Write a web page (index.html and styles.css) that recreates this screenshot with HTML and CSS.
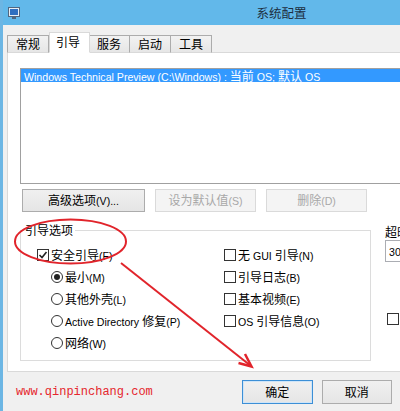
FILE: index.html
```html
<!DOCTYPE html>
<html lang="zh-CN">
<head>
<meta charset="utf-8">
<title>系统配置</title>
<link rel="stylesheet" href="styles.css">
</head>
<body>
<div class="window">
  <header class="titlebar">
    <svg class="app-icon" width="12" height="12" viewBox="0 0 12 12">
      <rect x="0.5" y="0.5" width="11" height="9" fill="#e8eef5" stroke="#51667f"/>
      <rect x="2" y="2" width="8" height="6" fill="#2f6fc0"/>
      <rect x="4" y="10" width="4" height="2" fill="#51667f"/>
    </svg>
    <span class="title">系统配置</span>
    <span></span>
  </header>
  <div class="client">
    <div class="tabs">
      <div class="tab">常规</div>
      <div class="tab active">引导</div>
      <div class="tab">服务</div>
      <div class="tab">启动</div>
      <div class="tab">工具</div>
    </div>
    <div class="panel">
      <div class="listbox">
        <div class="item selected"><span class="en">Windows Technical Preview (C:\Windows) : </span>当前<span class="en"> OS; </span>默认<span class="en"> OS</span></div>
      </div>
      <div class="btn-row">
        <button class="btn adv">高级选项<span class="en">(V)...</span></button>
        <button class="btn mid" disabled>设为默认值<span class="en">(S)</span></button>
        <button class="btn mid" disabled>删除<span class="en">(D)</span></button>
      </div>
      <div class="lower">
        <fieldset class="group">
          <legend>引导选项</legend>
          <div class="cols">
            <div class="col">
              <div class="opt"><span class="cb"><svg width="10" height="10" viewBox="0 0 10 10"><polyline points="1.5,5 4,7.5 8.5,2" fill="none" stroke="#222" stroke-width="1.6"/></svg></span><span class="lbl">安全引导<span class="en">(F)</span></span></div>
              <div class="opt sub"><span class="rb on"></span><span class="lbl">最小<span class="en">(M)</span></span></div>
              <div class="opt sub"><span class="rb"></span><span class="lbl">其他外壳<span class="en">(L)</span></span></div>
              <div class="opt sub"><span class="rb"></span><span class="lbl"><span class="en">Active Directory </span>修复<span class="en">(P)</span></span></div>
              <div class="opt sub"><span class="rb"></span><span class="lbl">网络<span class="en">(W)</span></span></div>
            </div>
            <div class="col">
              <div class="opt"><span class="cb"></span><span class="lbl">无<span class="en"> GUI </span>引导<span class="en">(N)</span></span></div>
              <div class="opt"><span class="cb"></span><span class="lbl">引导日志<span class="en">(B)</span></span></div>
              <div class="opt"><span class="cb"></span><span class="lbl">基本视频<span class="en">(E)</span></span></div>
              <div class="opt"><span class="cb"></span><span class="lbl"><span class="en">OS </span>引导信息<span class="en">(O)</span></span></div>
            </div>
          </div>
        </fieldset>
        <div class="timeout">
          <div class="t-label">超时<span class="en">(T):</span></div>
          <div class="t-input"><span class="en">30</span></div>
          <div class="opt perm"><span class="cb"></span><span class="lbl">使所有引导设置成为永久设置<span class="en">(K)</span></span></div>
        </div>
      </div>
    </div>
    <div class="footer">
      <span class="site">www.qinpinchang.com</span>
      <button class="btn foot default">确定</button>
      <button class="btn foot">取消</button>
      <button class="btn foot">应用<span class="en">(A)</span></button>
      <button class="btn foot">帮助</button>
    </div>
  </div>
  <svg class="annot" width="400" height="411" viewBox="0 0 400 411">
    <ellipse cx="70.5" cy="241.5" rx="55.5" ry="22" fill="none" stroke="#e1242b" stroke-width="2"/>
    <line x1="121" y1="263" x2="251" y2="366" stroke="#e1242b" stroke-width="2"/>
    <polyline points="245,354 251.5,366.5 238.5,363" fill="none" stroke="#e1242b" stroke-width="2.5" stroke-linejoin="miter"/>
  </svg>
</div>
</body>
</html>
```

FILE: styles.css
```css
html, body {
  margin: 0;
  padding: 0;
}

body {
  width: 400px;
  height: 411px;
  overflow: hidden;
  background: #f0f0f0;
  font-family: "Noto Sans CJK SC", "Noto Sans", sans-serif;
  font-size: 12px;
  color: #000;
}

.en {
  font-family: "Liberation Sans", "Noto Sans", sans-serif;
  font-size: 10.6px;
}

.window {
  position: relative;
  width: 557px;
  height: 411px;
  background: #f0f0f0;
  border-left: 3px solid #6cb6e4;
}

.titlebar {
  height: 25px;
  background: #62b8ea;
  display: grid;
  grid-template-columns: 1fr auto 1fr;
  align-items: center;
}

.app-icon {
  margin-left: 5px;
}

.title {
  font-size: 12.5px;
  line-height: 14px;
  color: #1c2e40;
}

.client {
  padding-left: 4px;
}

.tabs {
  display: flex;
  align-items: flex-end;
  margin-top: 7px;
  height: 21px;
  position: relative;
  z-index: 1;
  margin-bottom: -1px;
}

.tab {
  box-sizing: border-box;
  height: 18px;
  padding: 0 8px;
  border: 1px solid #acacac;
  border-bottom: 1px solid #d9d9d9;
  background: linear-gradient(#f2f2f2, #e6e6e6);
  line-height: 16px;
  margin-left: -1px;
}

.tab:first-child {
  margin-left: 0;
}

.tab.active {
  height: 21px;
  padding: 0 9px 0 6px;
  background: #fff;
  border-color: #d9d9d9;
  border-bottom-color: #fff;
  line-height: 18px;
  margin-left: 0;
  margin-right: -1px;
  position: relative;
  z-index: 2;
}

.panel {
  background: #fff;
  border: 1px solid #d9d9d9;
  margin-right: 7px;
  padding: 15px 12px 10px 12px;
}

.listbox {
  box-sizing: border-box;
  height: 116px;
  border: 1px solid #a0a0a0;
  background: #fff;
}

.item {
  height: 13px;
  line-height: 13px;
  padding-left: 3px;
  white-space: nowrap;
}

.item.selected {
  background: #3399ff;
  color: #fff;
}

.btn-row {
  display: flex;
  margin-top: 5px;
  padding-left: 2px;
  gap: 10px;
}

.btn {
  box-sizing: border-box;
  height: 23px;
  border: 1px solid #acacac;
  background: linear-gradient(#f0f0f0, #e5e5e5);
  font-family: inherit;
  font-size: 12px;
  color: #000;
  padding: 0;
  line-height: 20px;
}

.btn.adv {
  width: 123px;
}

.btn.mid {
  width: 101px;
}

.btn:disabled {
  background: #f4f4f4;
  border-color: #dadada;
  color: #a8a8a8;
}

.lower {
  display: flex;
  align-items: flex-start;
  margin-top: 10px;
}

.group {
  box-sizing: border-box;
  width: 351px;
  margin: 0;
  padding: 0 0 6px 0;
  border: 1px solid #dcdcdc;
  min-width: 0;
  flex: none;
}

.group legend {
  margin-left: 2px;
  padding: 0 2px;
  line-height: 16px;
  font-size: 12px;
}

.cols {
  display: grid;
  grid-template-columns: 187px 1fr;
  padding: 6px 0 0 16px;
}

.opt {
  display: flex;
  align-items: center;
  height: 22px;
  gap: 2px;
  white-space: nowrap;
}

.opt.sub {
  padding-left: 14px;
}

.lbl {
  line-height: 16px;
}

.cb {
  box-sizing: border-box;
  width: 12px;
  height: 12px;
  border: 1px solid #333;
  background: #fff;
  display: flex;
  align-items: center;
  justify-content: center;
  flex: none;
}

.rb {
  box-sizing: border-box;
  width: 12px;
  height: 12px;
  border: 1px solid #333;
  border-radius: 50%;
  background: #fff;
  display: flex;
  align-items: center;
  justify-content: center;
  flex: none;
}

.rb.on::after {
  content: "";
  width: 6px;
  height: 6px;
  border-radius: 50%;
  background: #222;
}

.timeout {
  margin-left: 14px;
  flex: none;
}

.t-label {
  margin-top: 4px;
  line-height: 12px;
  height: 12px;
}

.t-input {
  box-sizing: border-box;
  margin-top: 2px;
  width: 60px;
  height: 22px;
  border: 1px solid #abadb3;
  background: #fff;
  padding-left: 3px;
  line-height: 20px;
}

.opt.perm {
  margin-top: 46px;
  padding-left: 2px;
}

.footer {
  display: flex;
  align-items: center;
  margin-top: 8px;
  padding-left: 9px;
}

.site {
  flex: 0 0 226px;
  font-family: "Liberation Mono", monospace;
  font-size: 12px;
  color: #e5262d;
  line-height: 14px;
}

.btn.foot {
  width: 71px;
  height: 24px;
  margin-right: 9px;
}

.btn.default {
  border-color: #3c8fd6;
  box-shadow: inset 0 0 0 1px #cfe5f8;
}

.annot {
  position: absolute;
  left: -3px;
  top: 0;
  pointer-events: none;
}
```
